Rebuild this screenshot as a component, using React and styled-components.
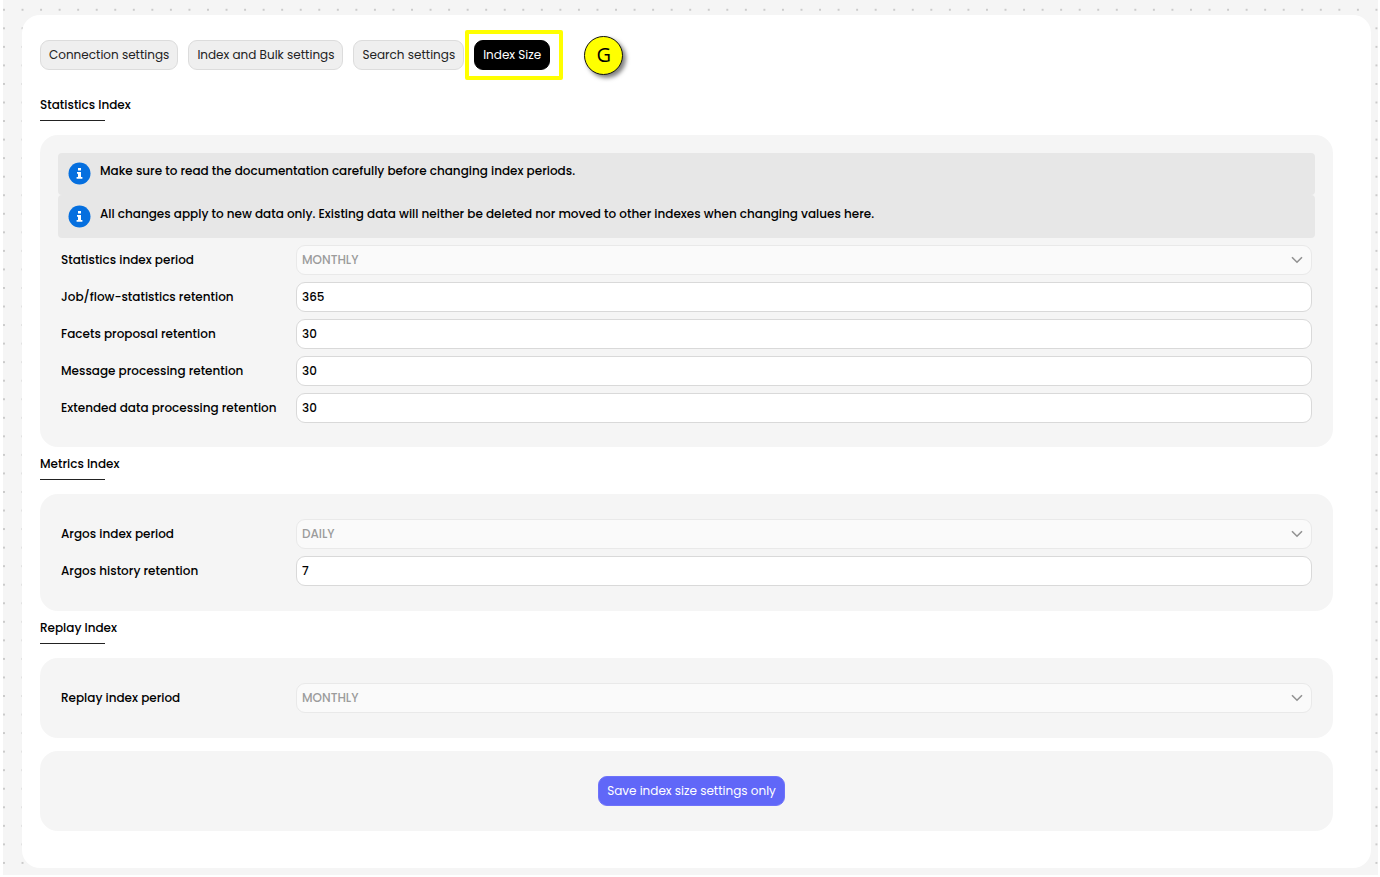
import React, { useId, useState } from "react";
import styled, { createGlobalStyle } from "styled-components";

const GlobalStyle = createGlobalStyle`
  *, *::before, *::after { box-sizing: border-box; }
  body {
    margin: 0;
    background: #fff;
    color: #000;
    font: 400 12px/20px Poppins, Inter, "Liberation Sans", sans-serif;
  }
  button, input, select { font: inherit; color: inherit; }
`;

const Backdrop = styled.div`
  margin: 0 2px 2px 3px;
  padding: 0 2px 3px 0;
  background-color: #f5f5f5;
  background-image: radial-gradient(circle at 1px 10px, #cacaca 1px, transparent 1px);
  background-origin: content-box;
  background-size: calc(100% / 74) calc(100% / 47);
  display: flow-root;
`;

const Card = styled.main`
  margin: 15px 5px 4px 19px;
  padding: 25px 38px 37px 18px;
  border-radius: 18px;
  background: #fff;
`;

const TabBar = styled.nav`
  display: flex;
  align-items: center;
  height: 30px;
  gap: 10px;
`;

const Tab = styled.button`
  height: 30px;
  padding: 0 8px;
  border: 1px solid ${(p) => (p.$active ? "#000" : "#dcdcdc")};
  border-radius: 9px;
  background: ${(p) => (p.$active ? "#000" : "#efefef")};
  color: ${(p) => (p.$active ? "#fff" : "#222")};
  white-space: nowrap;
`;

const Highlight = styled.div`
  margin-left: -9px;
  padding: 6px 9px 6px 5px;
  border: 4px solid #ff0;
  border-radius: 2px;
`;

const Marker = styled.span`
  display: grid;
  place-items: center;
  width: 39px;
  height: 39px;
  margin-left: 11px;
  border: 1px solid #111;
  border-radius: 50%;
  background: #ff0;
  box-shadow: 3px 3px 4px rgba(0, 0, 0, 0.5);
  font: 400 20px/24px "Open Sans", "Noto Sans", sans-serif;
`;

const SectionTitle = styled.h2`
  margin: ${(p) => (p.$first ? "25px" : "7px")} 0 14px;
  font-size: 12px;
  font-weight: 500;
  line-height: 20px;

  &::after {
    content: "";
    display: block;
    width: 65px;
    height: 1px;
    margin-top: 5px;
    background: #222;
  }
`;

const Panel = styled.section`
  display: flex;
  flex-direction: column;
  gap: 7px;
  padding: ${(p) => (p.$notices ? "18px" : "25px")} 21px ${(p) => (p.$notices ? "24px" : "25px")};
  border-radius: 18px;
  background: #f5f5f5;
`;

const Notices = styled.div`
  margin: 0 -3px;
`;

const Notice = styled.p`
  display: flex;
  align-items: flex-start;
  gap: 9px;
  margin: 0;
  padding: 8px 10px;
  border-radius: 4px;
  background: #e7e7e7;
  font-weight: 500;

  & + & { padding-top: 9px; }

  svg { flex: none; margin: 1px 0 2px; }
`;

const Row = styled.div`
  display: grid;
  grid-template-columns: 235px 1fr;
  align-items: center;
  height: 30px;
  font-weight: 500;
`;

const Input = styled.input`
  width: 100%;
  height: 30px;
  padding: 0 5px;
  border: 1px solid #d9d9d9;
  border-radius: 9px;
  background: #fff;
`;

const SelectBox = styled.div`
  position: relative;
  height: 30px;

  svg {
    position: absolute;
    right: 9px;
    top: 11px;
    pointer-events: none;
  }
`;

const Select = styled.select`
  appearance: none;
  width: 100%;
  height: 30px;
  padding: 0 28px 0 5px;
  border: 1px solid #e9e9e9;
  border-radius: 9px;
  background: #fafafa;
  color: #9c9c9c;
  opacity: 1;
`;

const Actions = styled.footer`
  display: flex;
  justify-content: center;
  margin-top: 13px;
  padding: 25px 0 25px 10px;
  border-radius: 18px;
  background: #f5f5f5;
`;

const SaveButton = styled.button`
  height: 30px;
  padding: 0 8px;
  border: 1px solid #6e72fa;
  border-radius: 9px;
  background: #6067f8;
  color: #fff;
`;

function InfoIcon() {
  return (
    <svg width="23" height="23" viewBox="0 0 23 23" aria-hidden="true">
      <circle cx="11.5" cy="11.5" r="11" fill="#056fdf" />
      <path
        d="M10 6h3v2.400h-3zM9 10h4v5h1.400v1.700H8.600V15H10v-3.300H9z"
        fill="#fff"
      />
    </svg>
  );
}

function Chevron() {
  return (
    <svg width="12" height="8" viewBox="0 0 12 8" fill="none" aria-hidden="true">
      <path d="M1 1.200 6 6.200 11 1.200" stroke="#929292" strokeWidth="1.600" />
    </svg>
  );
}

function NumberField({ label, initial }) {
  const id = useId();
  const [value, setValue] = useState(initial);
  return (
    <Row>
      <label htmlFor={id}>{label}</label>
      <Input id={id} inputMode="numeric" value={value} onChange={(e) => setValue(e.target.value)} />
    </Row>
  );
}

function PeriodField({ label, value }) {
  const id = useId();
  return (
    <Row>
      <label htmlFor={id}>{label}</label>
      <SelectBox>
        <Select id={id} disabled defaultValue={value}>
          <option>{value}</option>
        </Select>
        <Chevron />
      </SelectBox>
    </Row>
  );
}

export default function App() {
  return (
    <>
      <GlobalStyle />
      <Backdrop>
        <Card>
          <TabBar>
            <Tab type="button">Connection settings</Tab>
            <Tab type="button">Index and Bulk settings</Tab>
            <Tab type="button">Search settings</Tab>
            <Highlight>
              <Tab type="button" $active aria-current="page">Index Size</Tab>
            </Highlight>
            <Marker>G</Marker>
          </TabBar>

          <SectionTitle $first>Statistics Index</SectionTitle>
          <Panel $notices>
            <Notices>
              <Notice>
                <InfoIcon />
                Make sure to read the documentation carefully before changing index periods.
              </Notice>
              <Notice>
                <InfoIcon />
                All changes apply to new data only. Existing data will neither be deleted nor moved to other indexes when changing values here.
              </Notice>
            </Notices>
            <PeriodField label="Statistics index period" value="MONTHLY" />
            <NumberField label="Job/flow-statistics retention" initial="365" />
            <NumberField label="Facets proposal retention" initial="30" />
            <NumberField label="Message processing retention" initial="30" />
            <NumberField label="Extended data processing retention" initial="30" />
          </Panel>

          <SectionTitle>Metrics Index</SectionTitle>
          <Panel>
            <PeriodField label="Argos index period" value="DAILY" />
            <NumberField label="Argos history retention" initial="7" />
          </Panel>

          <SectionTitle>Replay Index</SectionTitle>
          <Panel>
            <PeriodField label="Replay index period" value="MONTHLY" />
          </Panel>

          <Actions>
            <SaveButton type="button">Save index size settings only</SaveButton>
          </Actions>
        </Card>
      </Backdrop>
    </>
  );
}
